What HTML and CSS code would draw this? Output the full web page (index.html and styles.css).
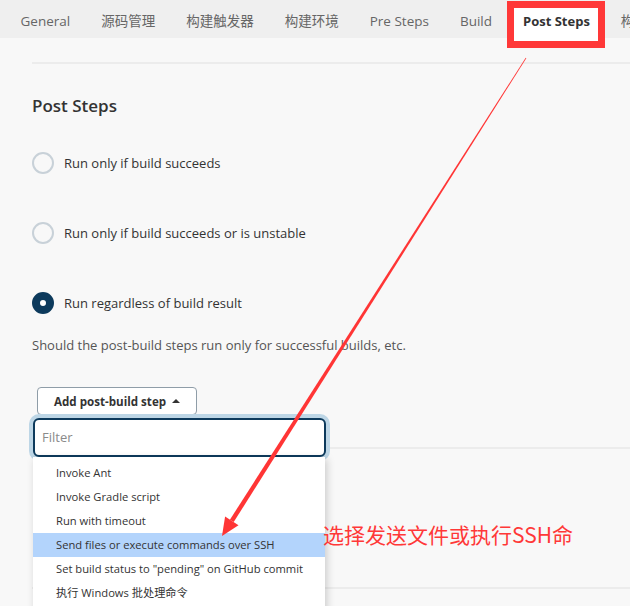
FILE: index.html
```html
<!DOCTYPE html>
<html lang="zh-CN">
<head>
    <meta charset="UTF-8">
    <meta name="viewport" content="width=device-width, initial-scale=1.0">
    <title>Post Steps</title>
    <link rel="stylesheet" href="styles.css">
</head>
<body>
    <div class="tab-bar">
        <div class="tab">General</div>
        <div class="tab">源码管理</div>
        <div class="tab">构建触发器</div>
        <div class="tab">构建环境</div>
        <div class="tab">Pre Steps</div>
        <div class="tab">Build</div>
        <div class="tab active">Post Steps</div>
        <div class="tab">构建设置</div>
    </div>

    <div class="content">
        <div class="divider"></div>
        <h2 class="section-title">Post Steps</h2>

        <label class="radio-row first"><span class="radio"></span>Run only if build succeeds</label>
        <label class="radio-row"><span class="radio"></span>Run only if build succeeds or is unstable</label>
        <label class="radio-row"><span class="radio checked"></span>Run regardless of build result</label>

        <p class="help">Should the post-build steps run only for successful builds, etc.</p>

        <div class="add-step">
            <button class="add-btn">Add post-build step <span class="caret"></span></button>
            <div class="dropdown">
                <div class="filter">Filter</div>
                <ul class="menu">
                    <li>Invoke Ant</li>
                    <li>Invoke Gradle script</li>
                    <li>Run with timeout</li>
                    <li class="hover">Send files or execute commands over SSH</li>
                    <li>Set build status to "pending" on GitHub commit</li>
                    <li>执行 Windows 批处理命令</li>
                    <li>执行 shell</li>
                </ul>
            </div>
        </div>

        <div class="section first"></div>
        <div class="section"></div>
    </div>

    <!-- annotation -->
    <div class="note">选择发送文件或执行SSH命</div>
    <svg class="arrow" width="630" height="606" viewBox="0 0 630 606">
        <polygon points="526.3,58.2 525.7,57.8 229.9,519.7 233.7,522.1" fill="#ff3535"/>
        <polygon points="222,536 238.5,525.3 225.1,516.5" fill="#ff3535"/>
    </svg>
</body>
</html>
```

FILE: styles.css
```css
html, body {
    overflow-x: hidden;
}
body {
    margin: 0;
    background: #f8f8f8;
    font-family: 'Open Sans', 'Noto Sans CJK SC', sans-serif;
    font-size: 13px;
    color: #333;
}
.tab-bar {
    display: flex;
    align-items: flex-start;
    height: 38px;
    padding-left: 5px;
    background: #efefef;
    white-space: nowrap;
}
.tab {
    flex-shrink: 0;
    padding: 4px 15.5px 0;
    line-height: 34px;
    font-size: 13.5px;
    color: #666;
}
.tab.active {
    position: relative;
    margin-top: 4px;
    padding-top: 0;
    height: 40px;
    background: #fff;
    color: #333;
    font-size: 13px;
    font-weight: 700;
}
.tab.active::after {
    content: "";
    position: absolute;
    top: -3px;
    left: 0;
    right: 0;
    bottom: -4px;
    border: 7px solid #ff3838;
}
.content {
    padding-left: 32px;
}
.divider {
    margin-top: 24px;
    border-top: 2px solid #ececec;
}
.section-title {
    margin: 30px 0 0;
    font-size: 17px;
    font-weight: 600;
    line-height: 24px;
    color: #333;
}
.radio-row {
    display: flex;
    align-items: center;
    gap: 10px;
    height: 22px;
    margin-top: 48px;
}
.radio-row.first {
    margin-top: 34px;
}
.radio {
    width: 22px;
    height: 22px;
    box-sizing: border-box;
    border: 2px solid #c8d1d8;
    border-radius: 50%;
}
.radio.checked {
    border: 8px solid #0d3a5c;
    background: #fff;
}
.help {
    margin: 21px 0 0;
    line-height: 20px;
    color: #555;
}
.add-step {
    position: relative;
    width: max-content;
    margin: 32px 0 0 5px;
}
.add-btn {
    display: flex;
    align-items: center;
    height: 28px;
    padding: 0 16px;
    border: 1px solid #8f9da8;
    border-radius: 4px;
    background: #fff;
    color: #333;
    font-family: inherit;
    font-size: 11.6px;
    font-weight: 700;
}
.caret {
    margin-left: 6px;
    border-left: 4px solid transparent;
    border-right: 4px solid transparent;
    border-bottom: 4px solid #333;
}
.dropdown {
    position: absolute;
    top: 31px;
    left: -4px;
    width: 293px;
    z-index: 2;
}
.filter {
    height: 39px;
    box-sizing: border-box;
    padding-left: 7px;
    border: 2px solid #0d3a5c;
    border-radius: 6px;
    box-shadow: 0 0 0 4px #bdd6e6;
    background: #fff;
    color: #8a8a8a;
    line-height: 35px;
}
.menu {
    list-style: none;
    margin: 0;
    padding: 4px 0;
    width: 292px;
    background: #fff;
    box-shadow: 2px 2px 8px rgba(0, 0, 0, 0.18);
}
.menu li {
    padding-left: 23px;
    line-height: 24px;
    font-size: 11.2px;
    color: #333;
}
.menu li.hover {
    background: #b3d4fc;
}
.section {
    height: 138px;
    border-top: 2px solid #ececec;
}
.section.first {
    margin-top: 32px;
}
.note {
    position: absolute;
    left: 323px;
    top: 519px;
    z-index: 3;
    font-family: 'Noto Sans CJK SC', sans-serif;
    font-size: 21px;
    line-height: 30px;
    color: #ff3838;
}
.arrow {
    position: absolute;
    top: 0;
    left: 0;
    z-index: 3;
    pointer-events: none;
}
```
